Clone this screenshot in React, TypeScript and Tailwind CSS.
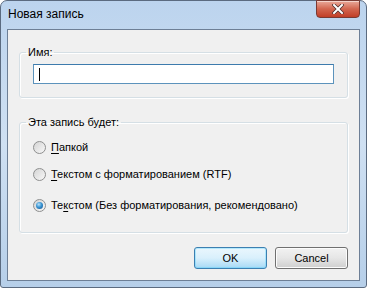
import React, { useState } from 'react';

const font = { fontFamily: '"Liberation Sans", Arial, sans-serif' };

const Radio: React.FC<{ checked: boolean; onClick: () => void; children: React.ReactNode }> = ({ checked, onClick, children }) => (
  <label onClick={onClick} className="flex items-center gap-[5px] cursor-default">
    <span className="w-[13px] h-[13px] rounded-full border border-[#8e8f8f] bg-gradient-to-br from-[#d4d4d4] to-[#f8f8f8] flex items-center justify-center">
      {checked && (
        <span className="w-[7px] h-[7px] rounded-full bg-[radial-gradient(circle_at_40%_35%,#b8e2f9_0%,#3a95d3_45%,#0f4c8a_100%)]" />
      )}
    </span>
    <span className="text-[11px] leading-[13px] text-black">{children}</span>
  </label>
);

const U: React.FC<{ children: React.ReactNode }> = ({ children }) => <span className="underline underline-offset-2">{children}</span>;

export default function App() {
  const [mode, setMode] = useState(2);

  return (
    <div className="w-[367px] h-[288px] bg-white" style={font}>
      <div className="w-full h-full rounded-t-[7px] rounded-b-[3px] border border-[#5b6b80] bg-gradient-to-b from-[#bcd4ee] via-[#cfe0f2] to-[#b6cfe9] flex flex-col">
        {/* Заголовок */}
        <div className="h-[28px] flex items-start justify-between pl-[7px] pr-[6px]">
          <span className="mt-[7px] text-[12px] leading-none text-black">Новая запись</span>
          <button className="w-[44px] h-[18px] -mt-px rounded-b-[4px] border border-[#7a3a33] bg-gradient-to-b from-[#e9a99a] via-[#d2654f] to-[#c13e27] flex items-center justify-center shadow-[inset_0_1px_0_rgba(255,255,255,0.5)]">
            <svg width="12" height="10" viewBox="0 0 12 10">
              <path d="M2 1 L10 9 M10 1 L2 9" stroke="#4a2a2a" strokeWidth="3.4" strokeLinecap="square" />
              <path d="M2 1 L10 9 M10 1 L2 9" stroke="#ffffff" strokeWidth="2" strokeLinecap="square" />
            </svg>
          </button>
        </div>

        {/* Клиентская область */}
        <div className="flex-1 mx-[6px] mb-[6px] border border-[#6d7f96] bg-[#f0f0f0] flex flex-col px-[11px] pt-[16px]">
          <fieldset className="border border-[#d5dfe5] rounded-[3px] px-[13px] pb-[13px] pt-[6px] shadow-[inset_1px_1px_0_#fff,1px_1px_0_#fff]">
            <legend className="px-[2px] ml-[-7px] text-[11px] leading-[12px] text-black">Имя:</legend>
            <div className="h-[20px] border border-[#5c93bc] border-t-[#3d7bad] bg-white flex items-center pl-[5px]">
              <span className="w-px h-[13px] bg-black" />
            </div>
          </fieldset>

          <fieldset className="mt-[18px] border border-[#d5dfe5] rounded-[3px] px-[13px] pt-[13px] pb-[20px] shadow-[inset_1px_1px_0_#fff,1px_1px_0_#fff] flex flex-col">
            <legend className="px-[2px] ml-[-7px] text-[11px] leading-[12px] text-black">Эта запись будет:</legend>
            <div className="flex flex-col">
              <Radio checked={mode === 0} onClick={() => setMode(0)}>
                <U>П</U>апкой
              </Radio>
              <div className="mt-[14px]">
                <Radio checked={mode === 1} onClick={() => setMode(1)}>
                  <U>Т</U>екстом с форматированием (RTF)
                </Radio>
              </div>
              <div className="mt-[18px]">
                <Radio checked={mode === 2} onClick={() => setMode(2)}>
                  Те<U>к</U>стом (Без форматирования, рекомендовано)
                </Radio>
              </div>
            </div>
          </fieldset>

          <div className="mt-auto mb-[11px] flex justify-end gap-[8px]">
            <button className="w-[73px] h-[22px] rounded-[3px] border border-[#3c7fb1] bg-gradient-to-b from-[#eaf6fd] via-[#d9f0fc] to-[#a7d9f5] text-[11px] text-black shadow-[inset_0_0_0_1px_#48d0fb55]">
              OK
            </button>
            <button className="w-[73px] h-[22px] rounded-[3px] border border-[#707070] bg-gradient-to-b from-[#f2f2f2] via-[#e6e6e6] to-[#cfcfcf] text-[11px] text-black shadow-[inset_0_0_0_1px_#fcfcfc]">
              Cancel
            </button>
          </div>
        </div>
      </div>
    </div>
  );
}
